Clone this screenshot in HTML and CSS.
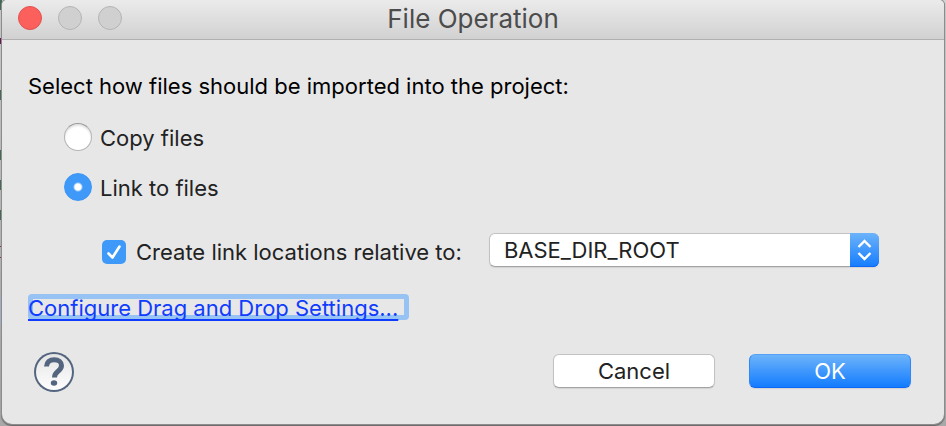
FILE: index.html
```html
<!DOCTYPE html>
<html lang="en">
<head>
<meta charset="utf-8">
<title>File Operation</title>
<link rel="stylesheet" href="styles.css">
</head>
<body>
<form class="dialog" role="dialog" aria-labelledby="dialog-title">
  <header class="titlebar">
    <div class="lights">
      <button type="button" class="light light-close" aria-label="Close"></button>
      <button type="button" class="light" aria-label="Minimize" disabled></button>
      <button type="button" class="light" aria-label="Zoom" disabled></button>
    </div>
    <h1 class="title" id="dialog-title">File Operation</h1>
  </header>
  <main class="content">
    <p class="prompt" id="prompt">Select how files should be imported into the project:</p>
    <div class="options" role="radiogroup" aria-labelledby="prompt">
      <label class="option"><input class="radio" type="radio" name="mode"><span>Copy files</span></label>
      <label class="option"><input class="radio" type="radio" name="mode" checked><span>Link to files</span></label>
    </div>
    <div class="relative-row">
      <label class="check-label"><input class="checkbox" type="checkbox" checked><span id="relative-text">Create link locations relative to:</span></label>
      <div class="select-wrap">
        <select class="select" aria-labelledby="relative-text">
          <option>BASE_DIR_ROOT</option>
        </select>
        <svg class="stepper" viewBox="0 0 29 34" aria-hidden="true">
          <path d="M8.500 14 14.500 8 20.500 14M8.500 20 14.500 26 20.500 20"/>
        </svg>
      </div>
    </div>
    <a class="settings-link" href="#settings">Configure Drag and Drop Settings...</a>
    <footer class="actions">
      <button type="button" class="help" aria-label="Help">
        <svg viewBox="0 0 40 40" aria-hidden="true">
          <path class="help-hook" d="M12.500 14.500C12.700 10 15.700 7.700 20.200 7.700c4.500 0 7.300 2.400 7.300 5.800 0 3-1.800 4.500-4 6.200-2 1.600-3 2.700-3 5.800"/>
          <ellipse class="help-dot" cx="20" cy="31" rx="3.200" ry="2.800"/>
        </svg>
      </button>
      <button type="button" class="button">Cancel</button>
      <button type="submit" class="button button-primary">OK</button>
    </footer>
  </main>
</form>
</body>
</html>
```
FILE: styles.css
```css
* { box-sizing: border-box; }

body {
  margin: 0;
  padding: 0 2px 2px;
  min-height: 100vh;
  display: flex;
  color: #222;
  font: 22px/28px Inter, "Liberation Sans", sans-serif;
  /* Slivers of the editor window behind the dialog */
  background:
    linear-gradient(#3f6b55 0 10px, transparent 10px 38px, #6b1050 38px 44px,
      transparent 44px 90px, #3f6b55 90px 100px, transparent 100px 150px,
      #3f6b55 150px 160px, transparent 160px 180px, #3f6b55 180px 190px,
      transparent 190px 210px, #3f6b55 210px 220px, transparent 220px 246px,
      #8a2a70 246px 247px, transparent 247px 257px, #8a2a70 257px 258px,
      transparent 258px 296px, #a9b4cc 296px 325px, transparent 325px)
      left / 2px 100% no-repeat,
    linear-gradient(#d2d2d2, #a8a8a8);
}

.dialog {
  flex: 1;
  display: flex;
  flex-direction: column;
  background: #e7e7e7;
  border-radius: 5px 5px 10px 10px;
  box-shadow: 0 0 0 1px #8c8c8c, 0 1px 1px 1px #686566;
  overflow: hidden;
}

.titlebar {
  display: grid;
  grid-template-columns: 1fr auto 1fr;
  align-items: center;
  height: 40px;
  padding: 0 16px 3px;
  background: linear-gradient(#ebebeb, #d1d1d1);
  border-bottom: 1px solid #b0b0b0;
}

.lights { display: flex; gap: 16px; }

.light {
  width: 24px;
  height: 24px;
  padding: 0;
  border: 1px solid #b5b5b5;
  border-radius: 50%;
  background: #d0d0d0;
}

.light-close { background: #fc605c; border-color: #e2504d; }

.title {
  margin: 0;
  padding-top: 2px;
  font-size: 26px;
  font-weight: 400;
  color: #4c4c4c;
}

.content {
  flex: 1;
  display: flex;
  flex-direction: column;
  align-items: flex-start;
  padding: 32px 33px 32px 26px;
}

.prompt { margin: 0; color: #000; }

.options {
  display: flex;
  flex-direction: column;
  gap: 20px;
  margin: 22px 0 0 36px;
}

.option { display: flex; align-items: center; gap: 8px; }
.option span { padding-top: 2px; }

.radio, .checkbox { appearance: none; margin: 0; flex: none; }

.radio {
  width: 28px;
  height: 28px;
  border-radius: 50%;
  border: 1px solid #b4b4b4;
  border-top-color: #999;
  background: #fff;
  box-shadow: inset 0 2px 2px #e3e3e3;
}

.radio:checked {
  border-color: #3b95f5;
  background: radial-gradient(circle, #fff 3px, #3f99f8 5px);
  box-shadow: none;
}

.relative-row {
  display: flex;
  align-items: center;
  align-self: stretch;
  margin: 31px 32px 0 74px;
}

.check-label { display: flex; align-items: center; gap: 10px; padding-top: 4px; }

.checkbox {
  width: 24px;
  height: 24px;
  border-radius: 5px;
  background: #3f99f8 url("data:image/svg+xml,%3Csvg xmlns='http://www.w3.org/2000/svg' viewBox='0 0 24 24'%3E%3Cpath d='M6.500 13.500 10.500 17.500 17.500 6.500' fill='none' stroke='white' stroke-width='2.600' stroke-linecap='round' stroke-linejoin='round'/%3E%3C/svg%3E");
}

.select-wrap {
  flex: 1;
  position: relative;
  margin-left: 27px;
}

.select {
  appearance: none;
  display: block;
  width: 100%;
  height: 34px;
  padding: 0 40px 0 14px;
  border: 1px solid #c2c2c2;
  border-bottom-color: #a4a4a4;
  border-radius: 6px;
  background: #fff;
  box-shadow: 0 1px 1px #d2d2d2;
  color: #222;
  font: inherit;
}

.stepper {
  position: absolute;
  top: 0;
  right: 0;
  width: 29px;
  height: 34px;
  border-radius: 0 6px 6px 0;
  background: linear-gradient(#6cb3fa, #147cff);
  box-shadow: inset 0 -1px #0f68f5;
  fill: none;
  stroke: #fff;
  stroke-width: 2.4;
  pointer-events: none;
}

.settings-link {
  height: 26px;
  margin-top: 27px;
  padding-right: 11px;
  border-radius: 4px;
  box-shadow: inset 0 0 0 5px #96c3f3;
  color: #0f3cff;
  text-decoration: underline;
  text-decoration-thickness: 2px;
  text-underline-offset: 3px;
  text-decoration-skip-ink: none;
}

.actions {
  display: flex;
  align-items: center;
  align-self: stretch;
  gap: 34px;
  margin-top: 32px;
}

.help {
  width: 40px;
  height: 40px;
  margin: 0 auto 0 6px;
  padding: 0;
  border: 0;
  border-radius: 50%;
  background: linear-gradient(#e4e4e4, #fff);
  box-shadow: inset 0 0 0 2px #53657f;
}

.help svg { display: block; }
.help-hook { fill: none; stroke: #53657f; stroke-width: 5; }
.help-dot { fill: #53657f; }

.button {
  width: 162px;
  height: 34px;
  margin-bottom: 2px;
  padding: 0;
  border: 1px solid #c2c2c2;
  border-bottom-color: #a4a4a4;
  border-radius: 6px;
  background: #fff;
  box-shadow: 0 1px 1px #d2d2d2;
  color: #222;
  font: inherit;
}

.button-primary {
  border-color: #55a2f5 #2f87f8 #0f68f5;
  background: linear-gradient(#6cb3fa, #147cff);
  color: #fff;
}
```
